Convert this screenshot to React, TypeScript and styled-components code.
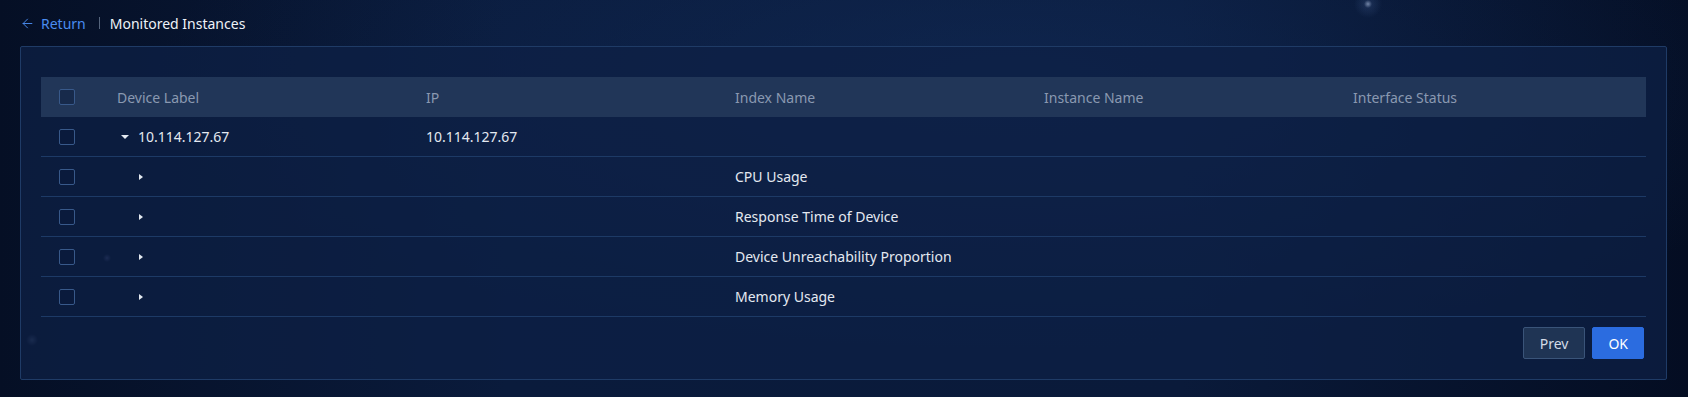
import React from 'react';
import styled, { createGlobalStyle } from 'styled-components';
import { ArrowLeft } from 'lucide-react';

const GlobalStyle = createGlobalStyle`
  html, body {
    margin: 0;
    padding: 0;
    height: 100%;
  }
  body {
    font-family: "Noto Sans", "Liberation Sans", Arial, sans-serif;
    font-size: 14px;
    color: #e4e9f1;
    background: #06122b;
  }
  * {
    box-sizing: border-box;
  }
`;

const Page = styled.div`
  min-height: 397px;
  padding: 0 21px 18px 20px;
  background:
    radial-gradient(circle at 1368px 4px, rgba(200, 220, 255, 0.55) 0, rgba(120, 160, 230, 0.12) 4px, transparent 14px),
    radial-gradient(circle at 32px 340px, rgba(170, 190, 230, 0.35) 0, transparent 6px),
    radial-gradient(circle at 107px 258px, rgba(170, 170, 240, 0.4) 0, transparent 4px),
    radial-gradient(ellipse at 60% 20%, rgba(20, 50, 100, 0.45) 0%, transparent 60%),
    linear-gradient(90deg, #050f25 0%, #0a1b3c 30%, #0a1a3a 70%, #040d22 100%);
`;

const TopBar = styled.div`
  height: 46px;
  display: flex;
  align-items: center;
`;

const BackLink = styled.a`
  display: flex;
  align-items: center;
  gap: 6px;
  color: #4a8cf0;
  text-decoration: none;
  cursor: pointer;
`;

const Divider = styled.span`
  width: 1px;
  height: 12px;
  margin: 0 10px 0 13px;
  background: #55647c;
`;

const Title = styled.span`
  color: #eef2f8;
`;

const Panel = styled.section`
  border: 1px solid #1f3b66;
  border-radius: 2px;
  background: rgba(13, 32, 70, 0.75);
  padding: 30px 20px 20px;
`;

const Row = styled.div<{ $head?: boolean }>`
  display: grid;
  grid-template-columns: 60px repeat(5, 1fr);
  height: 40px;
  align-items: center;
  background: ${p => (p.$head ? '#213658' : 'transparent')};
  border-bottom: ${p => (p.$head ? 'none' : '1px solid #1d3a66')};
  color: ${p => (p.$head ? '#8a99b1' : '#e4e9f1')};
`;

const CheckCell = styled.div`
  padding-left: 18px;
  display: flex;
  align-items: center;
`;

const Checkbox = styled.span`
  width: 16px;
  height: 16px;
  border: 1px solid #38598a;
  border-radius: 2px;
  background: rgba(10, 26, 58, 0.4);
`;

const Cell = styled.div`
  padding-left: 16px;
  white-space: nowrap;
`;

const TreeCell = styled.div<{ $depth: number }>`
  display: flex;
  align-items: center;
  padding-left: ${p => 16 + p.$depth * 16}px;
  white-space: nowrap;
`;

const Caret = styled.span<{ $open?: boolean }>`
  width: 16px;
  height: 16px;
  margin-right: 5px;
  display: flex;
  align-items: center;
  justify-content: center;

  &::before {
    content: '';
    width: 0;
    height: 0;
    ${p =>
      p.$open
        ? `border-left: 4px solid transparent;
           border-right: 4px solid transparent;
           border-top: 4px solid #e4e9f1;`
        : `border-top: 3.5px solid transparent;
           border-bottom: 3.5px solid transparent;
           border-left: 4px solid #e4e9f1;`}
  }
`;

const Footer = styled.div`
  display: flex;
  justify-content: flex-end;
  gap: 7px;
  margin-top: 10px;
  padding-right: 2px;
`;

const Button = styled.button<{ $primary?: boolean }>`
  height: 32px;
  padding: 0 ${p => (p.$primary ? 15 : 16)}px;
  border-radius: 2px;
  font-family: inherit;
  font-size: 14px;
  cursor: pointer;
  border: 1px solid ${p => (p.$primary ? '#2b6ce0' : '#3a5479')};
  background: ${p => (p.$primary ? '#2b6ce0' : '#1f3454')};
  color: ${p => (p.$primary ? '#ffffff' : '#d3dbe7')};
`;

const columns = ['Device Label', 'IP', 'Index Name', 'Instance Name', 'Interface Status'];

const indexes = [
  'CPU Usage',
  'Response Time of Device',
  'Device Unreachability Proportion',
  'Memory Usage',
];

export default function App() {
  return (
    <>
      <GlobalStyle />
      <Page>
        <TopBar>
          <BackLink>
            <ArrowLeft size={15} strokeWidth={1.5} />
            Return
          </BackLink>
          <Divider />
          <Title>Monitored Instances</Title>
        </TopBar>

        <Panel>
          <Row $head>
            <CheckCell>
              <Checkbox />
            </CheckCell>
            {columns.map(c => (
              <Cell key={c}>{c}</Cell>
            ))}
          </Row>

          <Row>
            <CheckCell>
              <Checkbox />
            </CheckCell>
            <TreeCell $depth={0}>
              <Caret $open />
              10.114.127.67
            </TreeCell>
            <Cell>10.114.127.67</Cell>
            <Cell />
            <Cell />
            <Cell />
          </Row>

          {indexes.map(name => (
            <Row key={name}>
              <CheckCell>
                <Checkbox />
              </CheckCell>
              <TreeCell $depth={1}>
                <Caret />
              </TreeCell>
              <Cell />
              <Cell>{name}</Cell>
              <Cell />
              <Cell />
            </Row>
          ))}

          <Footer>
            <Button>Prev</Button>
            <Button $primary>OK</Button>
          </Footer>
        </Panel>
      </Page>
    </>
  );
}
